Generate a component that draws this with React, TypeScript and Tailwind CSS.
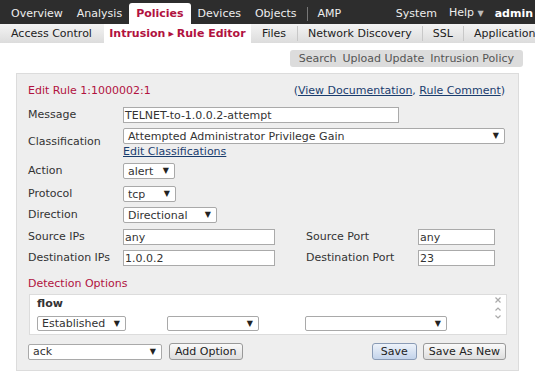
import React from 'react';

const font = { fontFamily: '"DejaVu Sans", Verdana, sans-serif' };

function Select({ value = '', className = '' }: { value?: string; className?: string }) {
  return (
    <div
      className={`flex h-[16px] shrink-0 items-center justify-between rounded-[2px] border border-[#a9a9a9] bg-white pl-[4px] pr-[5px] text-[11px] leading-none text-[#333] ${className}`}
    >
      <span>{value}</span>
      <span className="text-[8px] text-[#222]">▼</span>
    </div>
  );
}

function Input({ value, className = '' }: { value: string; className?: string }) {
  return (
    <div
      className={`flex h-[16px] shrink-0 items-center border border-[#aaa] bg-white pl-[1px] text-[11px] leading-none text-[#333] ${className}`}
    >
      {value}
    </div>
  );
}

function Row({ label, children, className = '' }: { label: string; children: React.ReactNode; className?: string }) {
  return (
    <div className={`flex items-center ${className}`}>
      <span className="w-[95px] shrink-0 text-[11px] text-[#333]">{label}</span>
      {children}
    </div>
  );
}

export default function App() {
  return (
    <div className="h-[374px] w-[535px] overflow-hidden bg-white leading-[14px]" style={font}>
      {/* top nav */}
      <div className="flex h-[24px] items-end whitespace-nowrap bg-[#2d2d2d] pl-[4px] text-[11px] text-[#eee]">
        <div className="flex h-[21px] items-center">
          <span className="px-[7px]">Overview</span>
          <span className="px-[7px]">Analysis</span>
          <span className="flex h-full items-center rounded-t-[3px] bg-white px-[7px] font-bold text-[#b1123f]">Policies</span>
          <span className="px-[7px]">Devices</span>
          <span className="pl-[7px] pr-[10px]">Objects</span>
          <span className="h-[14px] w-px bg-[#777]" />
          <span className="px-[10px]">AMP</span>
        </div>
        <div className="ml-auto flex h-[21px] items-center pr-[2px]">
          <span className="px-[6px]">System</span>
          <span className="px-[6px]">
            Help <span className="text-[8px] text-[#bbb]">▼</span>
          </span>
          <span className="pl-[5px] font-bold text-white">admin</span>
        </div>
      </div>

      {/* sub nav */}
      <div className="flex h-[19px] items-stretch whitespace-nowrap bg-gradient-to-b from-[#f4f4f4] to-[#dcdcdc] text-[11px] text-[#222]">
        <span className="flex shrink-0 items-center pl-[11px] pr-[12px]">Access Control</span>
        <span className="flex w-[147px] shrink-0 items-center justify-center bg-white font-bold text-[#b1123f]">
          Intrusion <span className="mx-[3px] text-[7px]">▶</span>Rule Editor
        </span>
        <span className="flex shrink-0 items-center px-[11px]">Files</span>
        <span className="my-[2px] w-px shrink-0 bg-[#c8c8c8]" />
        <span className="flex shrink-0 items-center px-[10px]">Network Discovery</span>
        <span className="my-[2px] w-px shrink-0 bg-[#c8c8c8]" />
        <span className="flex shrink-0 items-center px-[10px]">SSL</span>
        <span className="my-[2px] w-px shrink-0 bg-[#c8c8c8]" />
        <span className="flex shrink-0 items-center px-[10px]">Application</span>
      </div>

      {/* toolbar */}
      <div className="mt-[7px] flex justify-end pr-[12px]">
        <div className="flex h-[17px] items-center gap-[6px] rounded-[3px] bg-[#dcdcdc] px-[9px] text-[11px] text-[#555]">
          <span>Search</span>
          <span>Upload Update</span>
          <span>Intrusion Policy</span>
        </div>
      </div>

      {/* panel */}
      <div className="ml-[16px] mt-[6px] h-[298px] w-[503px] border border-[#dcdcdc] bg-[#eeeeee] px-[11px] pt-[10px]">
        <div className="flex items-center justify-between pr-[2px] text-[11px]">
          <span className="text-[#b1123f]">Edit Rule 1:1000002:1</span>
          <span className="text-[#1a3d6e]">
            (<span className="underline">View Documentation</span>, <span className="underline">Rule Comment</span>)
          </span>
        </div>

        <Row label="Message" className="mt-[9px]">
          <Input value="TELNET-to-1.0.0.2-attempt" className="w-[276px]" />
        </Row>

        <div className="mt-[5px] flex">
          <span className="w-[95px] shrink-0 pt-[7px] text-[11px] text-[#333]">Classification</span>
          <div className="flex flex-col">
            <Select value="Attempted Administrator Privilege Gain" className="w-[382px]" />
            <span className="mt-[1px] text-[11px] leading-[13px] text-[#1a3d6e] underline">Edit Classifications</span>
          </div>
        </div>

        <Row label="Action" className="mt-[5px]">
          <Select value="alert" className="w-[52px]" />
        </Row>
        <Row label="Protocol" className="mt-[7px]">
          <Select value="tcp" className="w-[53px]" />
        </Row>
        <Row label="Direction" className="mt-[5px]">
          <Select value="Directional" className="w-[94px]" />
        </Row>

        <Row label="Source IPs" className="mt-[6px]">
          <Input value="any" className="w-[152px]" />
          <span className="ml-[31px] w-[112px] text-[11px] text-[#333]">Source Port</span>
          <Input value="any" className="w-[77px]" />
        </Row>
        <Row label="Destination IPs" className="mt-[5px]">
          <Input value="1.0.0.2" className="w-[152px]" />
          <span className="ml-[31px] w-[112px] text-[11px] text-[#333]">Destination Port</span>
          <Input value="23" className="w-[77px]" />
        </Row>

        <div className="mt-[11px] text-[11px] text-[#b1123f]">Detection Options</div>

        <div className="relative ml-[1px] mt-[3px] h-[41px] w-[478px] border border-[#dcdcdc] bg-white pl-[7px] pt-[2px]">
          <div className="text-[11px] font-bold leading-[14px] text-[#333]">flow</div>
          <div className="mt-[5px] flex">
            <Select value="Established" className="!h-[15px] w-[89px]" />
            <Select className="ml-[41px] !h-[15px] w-[92px]" />
            <Select className="ml-[46px] !h-[15px] w-[142px]" />
          </div>
          <div className="absolute right-[5px] top-[2px] flex flex-col items-center gap-[4px]">
            <svg width="6" height="6" viewBox="0 0 6 6" className="stroke-[#aaa]" strokeWidth="1.2" fill="none">
              <path d="M0.5 0.5L5.5 5.5M5.5 0.5L0.5 5.5" />
            </svg>
            <svg width="6" height="4" viewBox="0 0 6 4" className="stroke-[#aaa]" strokeWidth="1.2" fill="none">
              <path d="M0.5 3.5L3 1L5.5 3.5" />
            </svg>
            <svg width="6" height="4" viewBox="0 0 6 4" className="stroke-[#aaa]" strokeWidth="1.2" fill="none">
              <path d="M0.5 0.5L3 3L5.5 0.5" />
            </svg>
          </div>
        </div>

        <div className="mt-[8px] flex items-center">
          <Select value="ack" className="w-[134px]" />
          <div className="ml-[7px] flex h-[17px] items-center rounded-[3px] border border-[#999] bg-gradient-to-b from-[#fafafa] to-[#dedede] px-[5px] text-[11px] text-[#222]">
            Add Option
          </div>
          <div className="ml-auto flex h-[17px] w-[45px] items-center justify-center rounded-[3px] border border-[#8a9bb5] bg-gradient-to-b from-[#eef3fa] to-[#c3d3ea] text-[11px] text-[#222]">
            Save
          </div>
          <div className="ml-[6px] mr-[1px] flex h-[17px] items-center rounded-[3px] border border-[#999] bg-gradient-to-b from-[#fafafa] to-[#dedede] px-[5px] text-[11px] text-[#222]">
            Save As New
          </div>
        </div>
      </div>
    </div>
  );
}
